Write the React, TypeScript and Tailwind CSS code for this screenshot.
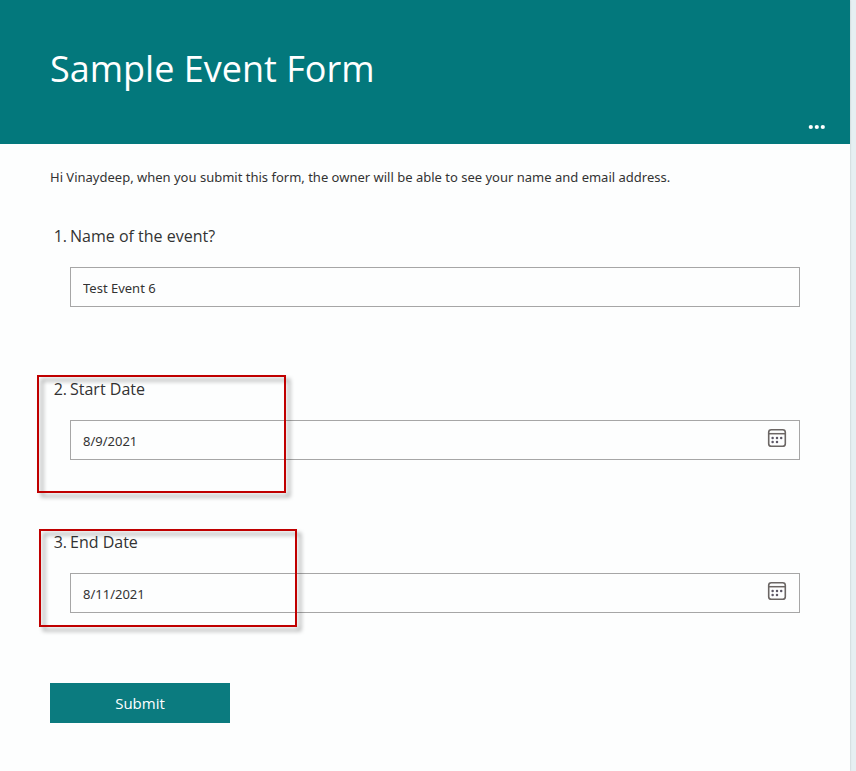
import { useState } from "react";

const highlightBase =
  "pointer-events-none absolute border-2 border-[#c00000] drop-shadow-[4px_4px_2px_rgba(0,0,0,0.4)]";

const questions = [
  { id: "name", label: "Name of the event?", isDate: false, highlight: "" },
  { id: "start", label: "Start Date", isDate: true, highlight: "-left-[13px] -top-[2px] h-[118px] w-[249px]" },
  { id: "end", label: "End Date", isDate: true, highlight: "-left-[11px] -top-[1px] h-[98px] w-[258px]" },
];

function CalendarIcon() {
  return (
    <svg width="20" height="20" viewBox="0 0 20 20" fill="none" aria-hidden="true">
      <rect x="1.7" y="1.7" width="16.6" height="16.6" rx="2.6" stroke="#6b6664" strokeWidth="1.6" />
      <path d="M1.5 5.7h17" stroke="#6b6664" strokeWidth="1.5" />
      <g fill="#5c5866">
        <circle cx="5.6" cy="9.9" r="1.25" />
        <circle cx="10" cy="9.9" r="1.25" />
        <circle cx="14.2" cy="9.9" r="1.25" />
        <circle cx="5.6" cy="13.9" r="1.25" />
        <circle cx="10" cy="13.9" r="1.25" />
      </g>
    </svg>
  );
}

export default function App() {
  const [values, setValues] = useState<Record<string, string>>({
    name: "Test Event 6",
    start: "8/9/2021",
    end: "8/11/2021",
  });

  return (
    <div className="min-h-screen bg-[#e6eff2] pr-1.5 font-['Open_Sans','Noto_Sans',sans-serif] text-[#333333]">
      <div className="min-h-screen bg-[#fdfefe] shadow-[0_0_2px_rgba(0,0,0,0.2)]">
        <header className="flex h-36 flex-col justify-between bg-[#03787c] pb-2 pl-[50px] pr-6 pt-11 text-white">
          <h1 className="text-4xl leading-[50px]">Sample Event Form</h1>
          <button type="button" aria-label="More options" className="flex h-[18px] items-center self-end">
            <svg width="18" height="6" viewBox="0 0 18 6" fill="currentColor" aria-hidden="true">
              <circle cx="2.8" cy="3" r="2.1" />
              <circle cx="8.8" cy="3" r="2.1" />
              <circle cx="14.8" cy="3" r="2.1" />
            </svg>
          </button>
        </header>

        <form className="px-[50px] pb-12 pt-[23px]" onSubmit={(e) => e.preventDefault()}>
          <p className="font-['Noto_Sans','Open_Sans',sans-serif] text-[13px] leading-5">
            Hi Vinaydeep, when you submit this form, the owner will be able to see your name and email address.
          </p>

          <div className="mt-[37px] flex flex-col gap-[70px]">
            {questions.map((q, i) => (
              <div key={q.id} className="relative">
                <label htmlFor={q.id} className="flex text-base leading-6">
                  <span className="w-5 pr-[3px] text-right">{i + 1}.</span>
                  <span>{q.label}</span>
                </label>
                <div className="ml-5 mt-[19px] flex h-10 items-center border border-[#a6a6a6] pr-3">
                  <input
                    id={q.id}
                    type="text"
                    value={values[q.id]}
                    onChange={(e) => setValues({ ...values, [q.id]: e.target.value })}
                    className="h-full min-w-0 flex-1 bg-transparent px-3 pt-0.5 font-['Noto_Sans','Open_Sans',sans-serif] text-[13px] outline-none"
                  />
                  {q.isDate && (
                    <button type="button" aria-label={`Pick ${q.label}`} className="pb-1">
                      <CalendarIcon />
                    </button>
                  )}
                </div>
                {q.highlight && <div className={`${highlightBase} ${q.highlight}`} />}
              </div>
            ))}
          </div>

          <button type="submit" className="mt-[70px] h-10 w-[180px] bg-[#0b7b7f] text-[15px] text-white">
            Submit
          </button>
        </form>
      </div>
    </div>
  );
}
